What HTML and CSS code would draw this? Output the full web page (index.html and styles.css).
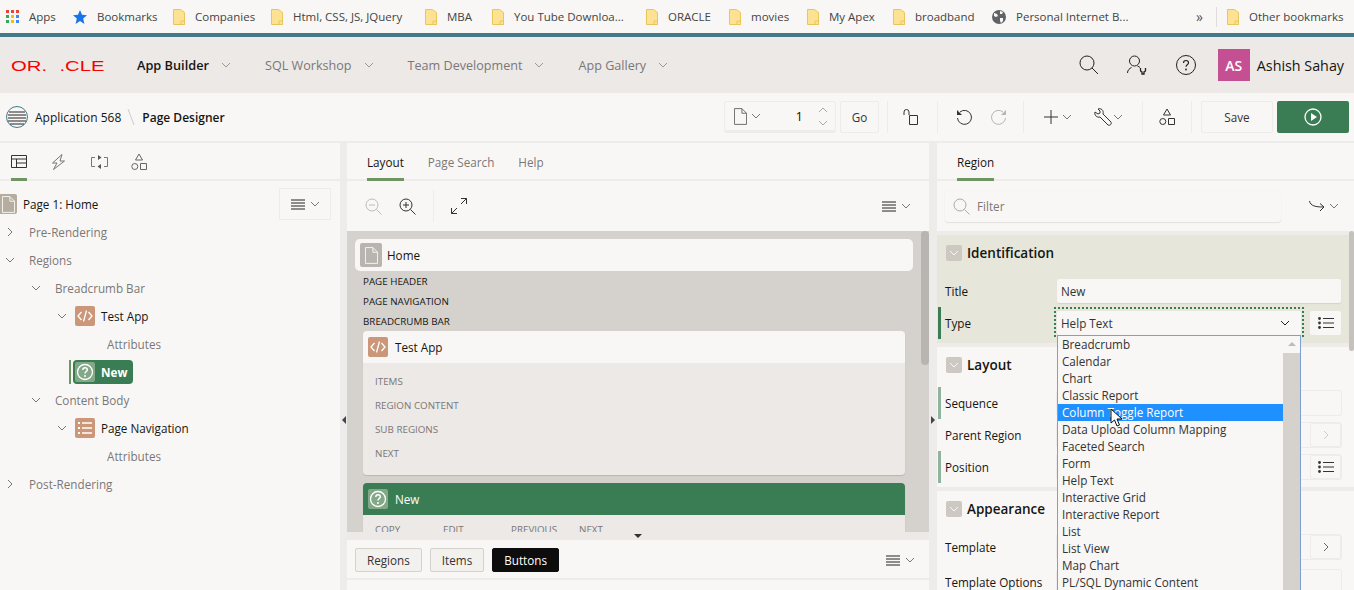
FILE: index.html
```html
<!DOCTYPE html>
<html>
<head>
    <title>Page Designer</title>
    <meta charset="utf-8" />
    <link rel="stylesheet" href="styles.css">
</head>
<body>
    <svg class="defs" width="0" height="0">
        <symbol id="chev-d" viewBox="0 0 10 6"><path d="M1 1l4 4 4-4" fill="none" stroke="currentColor"/></symbol>
        <symbol id="chev-r" viewBox="0 0 6 10"><path d="M1 1l4 4-4 4" fill="none" stroke="currentColor"/></symbol>
        <symbol id="folder" viewBox="0 0 12 16"><path d="M.5.5h7l4 3v12H.5z" fill="#fde293" stroke="#e8c65a"/><path d="M8 12h3.500v3.500H8z" fill="none" stroke="#e8c65a"/></symbol>
        <symbol id="menu" viewBox="0 0 14 11"><path d="M0 1h14M0 4h14M0 7h14M0 10h14" stroke="currentColor"/></symbol>
        <symbol id="code" viewBox="0 0 20 20"><rect width="20" height="20" rx="2" fill="#cc9678"/><path d="M6.500 6l-3.500 4 3.500 4M13.500 6l3.500 4-3.500 4M11.500 4.500l-3 11" fill="none" stroke="#fff" stroke-width="1.300"/></symbol>
        <symbol id="help" viewBox="0 0 20 20"><rect width="20" height="20" rx="2" fill="#83a888"/><circle cx="10" cy="10" r="7.500" fill="none" stroke="#fff" stroke-width="1.300"/><path d="M7.800 8c0-3 4.500-3 4.500-.3 0 1.800-2.300 1.800-2.300 3.800" fill="none" stroke="#fff" stroke-width="1.500"/><circle cx="10" cy="14" r="1" fill="#fff"/></symbol>
        <symbol id="bullets" viewBox="0 0 16 12"><path d="M5 1.500h11M5 6h11M5 10.500h11" stroke="currentColor"/><circle cx="1.500" cy="1.500" r="1.400" fill="currentColor"/><circle cx="1.500" cy="6" r="1.400" fill="currentColor"/><circle cx="1.500" cy="10.500" r="1.400" fill="currentColor"/></symbol>
        <symbol id="shapes" viewBox="0 0 16 18"><path d="M8 1l3.500 6h-7zM9.500 10.500h6v6h-6z" fill="none" stroke="currentColor"/><circle cx="3.800" cy="13.500" r="3" fill="none" stroke="currentColor"/></symbol>
        <symbol id="page" viewBox="0 0 14 18"><path d="M.5.500h8l5 5v12H.5zM8.500.500v5h5" fill="none" stroke="currentColor"/></symbol>
    </svg>

    <div class="bookmarks">
        <span class="bm bm-apps">
            <svg class="ico-apps" width="13" height="13" viewBox="0 0 13 13">
                <path d="M0 0h3v3H0z" fill="#ea4335"/><path d="M5 0h3v3H5z" fill="#ea4335"/><path d="M10 0h3v3h-3z" fill="#ea4335"/>
                <path d="M0 5h3v3H0z" fill="#34a853"/><path d="M5 5h3v3H5z" fill="#fbbc05"/><path d="M10 5h3v3h-3z" fill="#4285f4"/>
                <path d="M0 10h3v3H0z" fill="#34a853"/><path d="M5 10h3v3H5z" fill="#fbbc05"/><path d="M10 10h3v3h-3z" fill="#4285f4"/>
            </svg>Apps
        </span>
        <span class="bm bm-star">
            <svg width="14" height="14" viewBox="0 0 14 14"><path d="M7 0l2 4.800 5 .4-3.800 3.300L11.400 14 7 11.100 2.600 14l1.200-5.500L0 5.200l5-.4z" fill="#1a73e8"/></svg>Bookmarks
        </span>
        <span class="bm bm-comp"><svg class="fold"><use href="#folder"/></svg>Companies</span>
        <span class="bm bm-html"><svg class="fold"><use href="#folder"/></svg>Html, CSS, JS, JQuery</span>
        <span class="bm bm-mba"><svg class="fold"><use href="#folder"/></svg>MBA</span>
        <span class="bm bm-tube"><svg class="fold"><use href="#folder"/></svg>You Tube Downloa...</span>
        <span class="bm bm-ora"><svg class="fold"><use href="#folder"/></svg>ORACLE</span>
        <span class="bm bm-mov"><svg class="fold"><use href="#folder"/></svg>movies</span>
        <span class="bm bm-apex"><svg class="fold"><use href="#folder"/></svg>My Apex</span>
        <span class="bm bm-broad"><svg class="fold"><use href="#folder"/></svg>broadband</span>
        <span class="bm bm-pers">
            <svg width="14" height="14" viewBox="0 0 14 14"><circle cx="7" cy="7" r="7" fill="#5f6368"/><path d="M2 3l3 1 1 2-2 1-2-1zM8 1l3 1-1 2-2 0zM8 8l3 0 0 3-2 2-1-2z" fill="#f8f7f5"/></svg>Personal Internet B...
        </span>
        <span class="bm-more">»</span>
        <span class="bm-sep"></span>
        <span class="bm"><svg class="fold"><use href="#folder"/></svg>Other bookmarks</span>
    </div>
    <div class="teal-line"></div>

    <header class="app-head">
        <div class="logo-box"><span class="logo">OR. .CLE</span></div>
        <nav class="nav">
            <a class="nav-item nav-on">App Builder<svg class="chev"><use href="#chev-d"/></svg></a>
            <a class="nav-item">SQL Workshop<svg class="chev"><use href="#chev-d"/></svg></a>
            <a class="nav-item">Team Development<svg class="chev"><use href="#chev-d"/></svg></a>
            <a class="nav-item">App Gallery<svg class="chev"><use href="#chev-d"/></svg></a>
        </nav>
        <div class="head-right">
            <svg class="h-search" width="20" height="20" viewBox="0 0 20 20"><circle cx="8" cy="8" r="7" fill="none" stroke="#222"/><path d="M13 13l6 6" stroke="#222"/></svg>
            <svg class="h-user" width="22" height="21" viewBox="0 0 22 21"><circle cx="8.500" cy="6" r="5" fill="none" stroke="#222"/><path d="M1.500 18c0-3 2-4.500 4-5.500M11.500 11c1 .5 2 1 2.500 1.500" fill="none" stroke="#222"/><path d="M14.500 13v2.500a2 2 0 0 0 1.500 1.500v2h2v-2a2 2 0 0 0 1.500-1.500V13" fill="none" stroke="#222" stroke-width="1.300"/></svg>
            <svg class="h-help" width="20" height="20" viewBox="0 0 20 20"><circle cx="10" cy="10" r="9.500" fill="none" stroke="#222"/><path d="M7.500 8c0-3.300 5-3.300 5-.3 0 2-2.500 2-2.500 4" fill="none" stroke="#222" stroke-width="1.200"/><circle cx="10" cy="14.500" r=".9" fill="#222"/></svg>
            <span class="avatar">AS</span>
            <span class="user-name">Ashish Sahay</span>
        </div>
    </header>

    <div class="toolbar">
        <svg class="crumb-ico" width="22" height="22" viewBox="0 0 22 22"><circle cx="11" cy="11" r="10.500" fill="#f8f7f5" stroke="#437a8a"/><path d="M3 6h16M2 9h18M2 12h18M2 15h18M4 18h14" stroke="#222" stroke-width="1.200"/></svg>
        <span class="crumb">Application 568</span>
        <svg class="crumb-sep" width="8" height="18" viewBox="0 0 8 18"><path d="M1 1l6 16" stroke="#ccc"/></svg>
        <span class="crumb crumb-on">Page Designer</span>
        <div class="tools">
            <div class="page-field">
                <svg class="t-page"><use href="#page"/></svg>
                <svg class="chev t-chev"><use href="#chev-d"/></svg>
                <span class="page-num">1</span>
                <span class="spin">
                    <svg class="chev up"><use href="#chev-d"/></svg>
                    <svg class="chev"><use href="#chev-d"/></svg>
                </span>
            </div>
            <button class="tbtn go">Go</button>
            <span class="tsep s1"></span>
            <svg class="t-lock" width="15" height="16" viewBox="0 0 15 16"><path d="M1 6V3a2.500 2.500 0 0 1 5 0v3" fill="none" stroke="#333"/><path d="M6.500 6.500h8v9h-8z" fill="none" stroke="#333"/></svg>
            <span class="tsep s2"></span>
            <svg class="t-undo" width="16" height="16" viewBox="0 0 16 16"><path d="M4 3a7 7 0 1 1-2.500 6" fill="none" stroke="#333"/><path d="M1 1v5h5z" fill="#333"/></svg>
            <svg class="t-redo" width="16" height="16" viewBox="0 0 16 16"><path d="M12 3a7 7 0 1 0 2.500 6" fill="none" stroke="#b5b5b5"/><path d="M15 1v5h-5z" fill="#b5b5b5"/></svg>
            <span class="tsep s3"></span>
            <svg class="t-plus" width="14" height="14" viewBox="0 0 14 14"><path d="M7 0v14M0 7h14" stroke="#333"/></svg>
            <svg class="chev t-chev2"><use href="#chev-d"/></svg>
            <svg class="t-wrench" width="18" height="18" viewBox="0 0 18 18"><path d="M1 4l3 2 2-1 0-2-2-2c3-1 6 1 5 5l8 8c1 2-1 4-3 3L6 9C3 10 0 7 1 4z" fill="none" stroke="#333"/></svg>
            <svg class="chev t-chev3"><use href="#chev-d"/></svg>
            <span class="tsep s4"></span>
            <svg class="t-shapes"><use href="#shapes"/></svg>
            <span class="tsep s5"></span>
            <button class="tbtn save">Save</button>
            <button class="run">
                <svg width="18" height="18" viewBox="0 0 18 18"><circle cx="9" cy="9" r="8" fill="none" stroke="#fff" stroke-width="1.300"/><path d="M7 5l6 4-6 4z" fill="#fff"/></svg>
            </button>
        </div>
    </div>

    <main class="designer">
        <section class="pane-left">
            <div class="tabs icon-tabs">
                <span class="itab itab-on"><svg width="16" height="13" viewBox="0 0 16 13"><path d="M.5.500h15v12H.5zM.5 4h15M5.500 4v8.500M5.500 8h10" fill="none" stroke="#333"/></svg></span>
                <span class="itab"><svg class="i-bolt" width="15" height="16" viewBox="0 0 15 16"><path d="M11 .5L1.500 9H6l-3.500 6.500L13.500 7H9z" fill="none" stroke="#777"/></svg></span>
                <span class="itab"><svg width="17" height="14" viewBox="0 0 17 14"><path d="M4 2.500H.5v9H4M13 11.500h3.500v-9H13" fill="none" stroke="#777"/><path d="M7 0l3.500 2.500L7 5zM10 9l-3.500 2.500L10 14z" fill="#555"/></svg></span>
                <span class="itab"><svg class="t-shapes2"><use href="#shapes"/></svg></span>
            </div>
            <div class="tree">
                <div class="tree-top">
                    <span class="page-ico"><svg width="13" height="17"><use href="#page"/></svg></span>
                    <span class="t-dark">Page 1: Home</span>
                    <button class="menu-btn"><svg class="menu-ico"><use href="#menu"/></svg><svg class="chev"><use href="#chev-d"/></svg></button>
                </div>
                <div class="node lv0"><svg class="tog"><use href="#chev-r"/></svg>Pre-Rendering</div>
                <div class="node lv0"><svg class="tog tog-d"><use href="#chev-d"/></svg>Regions</div>
                <div class="node lv1"><svg class="tog tog-d"><use href="#chev-d"/></svg>Breadcrumb Bar</div>
                <div class="node lv2 t-dark"><svg class="tog tog-d"><use href="#chev-d"/></svg><svg class="n-ico"><use href="#code"/></svg>Test App</div>
                <div class="node lv3">Attributes</div>
                <div class="node lv2b">
                    <span class="sel-mark"></span>
                    <span class="sel-node"><svg class="n-ico"><use href="#help"/></svg>New</span>
                </div>
                <div class="node lv1"><svg class="tog tog-d"><use href="#chev-d"/></svg>Content Body</div>
                <div class="node lv2 t-dark"><svg class="tog tog-d"><use href="#chev-d"/></svg>
                    <svg class="n-ico" viewBox="0 0 20 20"><rect width="20" height="20" rx="2" fill="#cc9678"/><path d="M7 5h10M7 10h10M7 15h10" stroke="#fff" stroke-width="1.400"/><path d="M3 4h2v2H3zM3 9h2v2H3zM3 14h2v2H3z" fill="#fff"/></svg>Page Navigation
                </div>
                <div class="node lv3">Attributes</div>
                <div class="node lv0"><svg class="tog"><use href="#chev-r"/></svg>Post-Rendering</div>
            </div>
        </section>

        <div class="splitter"><span class="arr-l"></span></div>

        <section class="pane-mid">
            <div class="tabs">
                <span class="tab tab-on">Layout</span>
                <span class="tab">Page Search</span>
                <span class="tab">Help</span>
            </div>
            <div class="mid-tools">
                <svg class="z-out" width="17" height="17" viewBox="0 0 17 17"><circle cx="7" cy="7" r="6" fill="none" stroke="#bbb"/><path d="M4 7h6M11.500 11.500l5 5" stroke="#bbb"/></svg>
                <svg class="z-in" width="17" height="17" viewBox="0 0 17 17"><circle cx="7" cy="7" r="6" fill="none" stroke="#333"/><path d="M4 7h6M7 4v6M11.500 11.500l5 5" stroke="#333"/></svg>
                <span class="tsep m-sep"></span>
                <svg width="16" height="16" viewBox="0 0 16 16"><path d="M6 10L.5 15.500M.5 10v5.500H6M10 6l5.500-5.500M10 .5h5.500V6" fill="none" stroke="#333"/></svg>
                <svg class="menu-ico m-menu"><use href="#menu"/></svg><svg class="chev"><use href="#chev-d"/></svg>
            </div>
            <div class="canvas">
                <div class="scroll"><div class="thumb"></div></div>
                <div class="page-bar">
                    <span class="page-ico grey"><svg width="13" height="17"><use href="#page"/></svg></span>
                    Home
                </div>
                <div class="cap">PAGE HEADER</div>
                <div class="cap">PAGE NAVIGATION</div>
                <div class="cap">BREADCRUMB BAR</div>
                <div class="card">
                    <div class="card-head"><svg class="n-ico"><use href="#code"/></svg>Test App</div>
                    <div class="card-body">
                        <div class="slot">ITEMS</div>
                        <div class="slot">REGION CONTENT</div>
                        <div class="slot">SUB REGIONS</div>
                        <div class="slot">NEXT</div>
                    </div>
                </div>
                <div class="card card-green">
                    <div class="card-head"><svg class="n-ico"><use href="#help"/></svg>New</div>
                    <div class="card-body row-slots">
                        <span>COPY</span><span>EDIT</span><span>PREVIOUS</span><span>NEXT</span>
                    </div>
                </div>
            </div>
            <div class="h-split"><span class="arr-d"></span></div>
            <div class="gallery">
                <button class="g-btn">Regions</button>
                <button class="g-btn">Items</button>
                <button class="g-btn g-on">Buttons</button>
                <svg class="menu-ico g-menu"><use href="#menu"/></svg><svg class="chev"><use href="#chev-d"/></svg>
            </div>
        </section>

        <div class="splitter"><span class="arr-r"></span></div>

        <section class="pane-right">
            <div class="tabs">
                <span class="tab tab-on">Region</span>
            </div>
            <div class="filter-bar">
                <div class="filter">
                    <svg width="17" height="17" viewBox="0 0 17 17"><circle cx="7" cy="7" r="6" fill="none" stroke="#aaa"/><path d="M11.500 11.500l5 5" stroke="#aaa"/></svg>
                    Filter
                </div>
                <svg class="go-ico" width="16" height="12" viewBox="0 0 16 12"><path d="M.5 1c1 5 6 6 14 6M11 3.500L15 7l-4 4" fill="none" stroke="#333"/></svg>
                <svg class="chev"><use href="#chev-d"/></svg>
            </div>
            <div class="props">
                <div class="scroll-r"></div>
                <div class="sec sec-on">
                    <div class="sec-head"><span class="sec-tog"><svg class="chev"><use href="#chev-d"/></svg></span>Identification</div>
                    <div class="prop"><label>Title</label><span class="inp">New</span></div>
                    <div class="prop mark-dark"><label>Type</label>
                        <span class="sel-wrap"><span class="inp sel">Help Text<svg class="chev"><use href="#chev-d"/></svg></span></span>
                        <span class="side-btn flat"><svg class="bul"><use href="#bullets"/></svg></span>
                    </div>
                </div>
                <div class="sec">
                    <div class="sec-head"><span class="sec-tog"><svg class="chev"><use href="#chev-d"/></svg></span>Layout</div>
                    <div class="prop mark"><label>Sequence</label><span class="inp outl"></span></div>
                    <div class="prop"><label>Parent Region</label><span class="inp outl"></span><span class="side-btn"><svg class="side-chev"><use href="#chev-r"/></svg></span></div>
                    <div class="prop mark"><label>Position</label><span class="inp outl"></span><span class="side-btn"><svg class="bul"><use href="#bullets"/></svg></span></div>
                </div>
                <div class="sec">
                    <div class="sec-head"><span class="sec-tog"><svg class="chev"><use href="#chev-d"/></svg></span>Appearance</div>
                    <div class="prop"><label>Template</label><span class="inp outl"></span><span class="side-btn dark"><svg class="side-chev"><use href="#chev-r"/></svg></span></div>
                    <div class="prop p-last"><label>Template Options</label><span class="inp outl"></span></div>
                </div>
            </div>
        </section>
    </main>

    <ul class="dropdown">
        <li>Breadcrumb</li>
        <li>Calendar</li>
        <li>Chart</li>
        <li>Classic Report</li>
        <li class="hl">Column Toggle Report</li>
        <li>Data Upload Column Mapping</li>
        <li>Faceted Search</li>
        <li>Form</li>
        <li>Help Text</li>
        <li>Interactive Grid</li>
        <li>Interactive Report</li>
        <li>List</li>
        <li>List View</li>
        <li>Map Chart</li>
        <li>PL/SQL Dynamic Content</li>
        <li class="dd-track"><span class="dd-up"></span></li>
    </ul>
    <svg class="cursor" width="13" height="19" viewBox="0 0 13 19"><path d="M1 1v14l3.500-3 2.500 6 2.500-1-2.500-6h5z" fill="#fff" stroke="#111"/></svg>
</body>
</html>
```

FILE: styles.css
```css
* {
    box-sizing: border-box;
}

html, body {
    margin: 0;
    height: 590px;
    overflow: hidden;
}

body {
    position: relative;
    background-color: #f8f7f5;
    color: #5f6368;
    font-family: "Open Sans", sans-serif;
    font-size: 11.700px;
}

.defs {
    position: absolute;
}

button {
    font: inherit;
    padding: 0;
}

svg {
    flex: none;
}

.chev {
    width: 10px;
    height: 6px;
    color: #777;
}

/* bookmarks */
.bookmarks {
    height: 33px;
    display: flex;
    align-items: center;
    padding-left: 6px;
    color: #444;
    font-size: 11.500px;
    white-space: nowrap;
}

.bm {
    display: flex;
    align-items: center;
    gap: 10px;
}

.fold {
    width: 12px;
    height: 16px;
}

.bm-apps { width: 67px; }
.bm-star { width: 100px; }
.bm-comp { width: 98px; }
.bm-html { width: 154px; }
.bm-mba { width: 67px; }
.bm-tube { width: 154px; }
.bm-ora { width: 83px; }
.bm-mov { width: 78px; }
.bm-apex { width: 86px; }
.bm-broad { width: 99px; }
.bm-pers { width: 204px; }

.bm-more {
    width: 15px;
    color: #555;
    font-size: 14px;
}

.bm-sep {
    width: 1px;
    height: 20px;
    margin: 0 10px 0 5px;
    background-color: #ddd;
}

.teal-line {
    height: 4px;
    background-color: #437a8a;
}

/* app header */
.app-head {
    height: 56px;
    display: flex;
    align-items: center;
    background-color: #ece9e6;
}

.logo-box {
    width: 137px;
    padding-left: 11px;
}

.logo {
    display: inline-block;
    color: #f80000;
    font-family: "Liberation Sans", sans-serif;
    font-size: 15px;
    word-spacing: 5px;
    white-space: pre;
    transform: scaleX(1.35);
    transform-origin: left;
}

.nav {
    display: flex;
}

.nav-item {
    display: flex;
    align-items: center;
    gap: 12px;
    margin-right: 34px;
    color: #7b7777;
    font-size: 12.600px;
}

.nav-item .chev {
    color: #999;
}

.nav-on {
    color: #161513;
    font-size: 12.750px;
    font-weight: 600;
}

.head-right {
    margin-left: auto;
    display: flex;
    align-items: center;
    padding-right: 10px;
    color: #161513;
}

.h-user { margin: 0 0 0 27px; }
.h-help { margin: 0 22px 0 28px; }

.avatar {
    width: 32px;
    height: 32px;
    margin-right: 7px;
    display: flex;
    align-items: center;
    justify-content: center;
    background-color: #c54f93;
    color: #fff;
    font-weight: 600;
    font-size: 14px;
}

.user-name {
    font-size: 14.300px;
}

/* toolbar */
.toolbar {
    height: 48px;
    display: flex;
    align-items: center;
    padding: 0 5px 0 6px;
    color: #161513;
}

.crumb {
    margin-left: 7px;
    font-size: 12px;
}

.crumb-sep {
    margin-left: 6px;
}

.crumb-on {
    margin-left: 7px;
    font-weight: 600;
}

.tools {
    margin-left: auto;
    display: flex;
    align-items: center;
    height: 32px;
}

.page-field {
    width: 112px;
    height: 32px;
    display: flex;
    align-items: center;
    padding-left: 9px;
    border: 1px solid #eeecea;
    border-bottom-width: 3px;
    border-radius: 3px;
}

.t-page {
    width: 13px;
    height: 17px;
    color: #666;
}

.t-chev {
    margin-left: 4px;
}

.page-num {
    margin-left: auto;
    font-size: 13px;
}

.spin {
    width: 24px;
    margin-left: 8px;
    display: flex;
    flex-direction: column;
    align-items: center;
    gap: 7px;
}

.spin .chev {
    color: #aaa;
}

.up {
    transform: rotate(180deg);
}

.tbtn {
    height: 32px;
    background: none;
    border: 1px solid #eeecea;
    color: #333;
    border-radius: 2px;
}

.go {
    width: 39px;
    margin-left: 4px;
}

.tsep {
    width: 1px;
    height: 32px;
    background-color: #eeecea;
}

.s1 { margin: 0 15px 0 8px; }
.t-lock { margin-right: 19px; }
.s2 { margin-right: 18px; }
.t-redo { margin: 0 16px 0 19px; }
.t-plus { margin: 0 4px 0 20px; }
.t-chev2 { margin-right: 22px; }
.t-chev3 { margin: 0 19px 0 1px; }
.t-shapes {
    width: 16px;
    height: 18px;
    margin: 0 16px;
    color: #333;
}
.save {
    width: 72px;
    margin: 0 4px 0 9px;
}

.run {
    width: 72px;
    height: 32px;
    display: flex;
    align-items: center;
    justify-content: center;
    border: 0;
    border-radius: 2px;
    background-color: #3a7d54;
}

/* panes */
.designer {
    display: grid;
    grid-template-columns: 340px 7px 582px 8px 417px;
    height: 449px;
}

.splitter {
    display: flex;
    align-items: center;
    background-color: #eeecea;
}

.arr-l, .arr-r {
    width: 0;
    height: 0;
    border-top: 4px solid transparent;
    border-bottom: 4px solid transparent;
    margin: 275px 0 0 2px;
    align-self: flex-start;
}

.arr-l {
    border-right: 4px solid #444;
}

.arr-r {
    border-left: 4px solid #444;
}

.tabs {
    height: 40px;
    display: flex;
    gap: 24px;
    padding-left: 20px;
    border-top: 2px solid #eeecea;
    border-bottom: 2px solid #eeecea;
}

.tab {
    height: 38px;
    padding-top: 11px;
    color: #7b7777;
}

.tab-on {
    color: #161513;
    border-bottom: 3px solid #6f9563;
}

.icon-tabs {
    padding-left: 11px;
    gap: 24px;
}

.itab {
    width: 16px;
    height: 38px;
    padding-top: 12px;
}

.itab-on {
    border-bottom: 3px solid #6f9563;
}

.i-bolt {
    margin-top: -1px;
}

.t-shapes2 {
    width: 16px;
    height: 18px;
    margin-top: -2px;
    color: #666;
}

/* tree */
.tree {
    color: #7b7777;
}

.t-dark {
    color: #161513;
}

.tree-top {
    height: 42px;
    display: flex;
    align-items: center;
    padding: 4px 9px 0 0;
}

.page-ico {
    width: 17px;
    height: 20px;
    margin-right: 6px;
    display: flex;
    align-items: center;
    justify-content: center;
    background-color: #b5ad9e;
    border-radius: 0 2px 2px 0;
    color: #f8f7f5;
}

.page-ico svg {
    fill: #f8f7f5;
}

.menu-btn {
    width: 52px;
    height: 32px;
    margin-left: auto;
    display: flex;
    align-items: center;
    justify-content: center;
    gap: 5px;
    background: none;
    border: 1px solid #eeecea;
}

.menu-ico {
    width: 14px;
    height: 11px;
    color: #222;
}

.node {
    height: 28px;
    display: flex;
    align-items: center;
}

.tree-top + .node {
    margin-top: -5px;
}

.tog {
    width: 6px;
    height: 10px;
    margin-right: 16px;
    color: #777;
}

.tog-d {
    width: 10px;
    height: 6px;
    margin-right: 14px;
}

.lv0 { padding-left: 7px; }
.lv0 .tog-d { margin-left: -2px; }
.lv1 { padding-left: 31px; }
.lv2 { padding-left: 57px; }
.lv2 .tog { margin-right: 8px; }
.lv3 { padding-left: 107px; }
.lv2b { padding-left: 69px; }

.n-ico {
    width: 20px;
    height: 20px;
    margin-right: 6px;
}

.sel-mark {
    width: 2px;
    height: 24px;
    margin-right: 2px;
    background-color: #6f9563;
}

.sel-node {
    height: 24px;
    display: flex;
    align-items: center;
    padding: 0 6px 0 2px;
    border-radius: 4px;
    background-color: #3a7d54;
    color: #fff;
    font-weight: 700;
}

/* middle */
.pane-mid {
    position: relative;
}

.mid-tools {
    height: 50px;
    display: flex;
    align-items: center;
    padding: 0 18px;
}

.z-in { margin-left: 17px; }
.m-sep { margin: 0 17px; }
.m-menu { margin: 0 5px 0 auto; }

.canvas {
    position: relative;
    height: 301px;
    padding: 8px 16px 0 8px;
    overflow: hidden;
    background-color: #d5d2cd;
}

.scroll {
    position: absolute;
    top: 0;
    right: 0;
    width: 8px;
    height: 100%;
}

.thumb {
    height: 134px;
    border-radius: 4px;
    background-color: #b8b5b0;
}

.page-bar {
    height: 32px;
    display: flex;
    align-items: center;
    padding-left: 5px;
    border-radius: 5px;
    background-color: #f8f7f5;
    color: #161513;
}

.page-bar .grey {
    width: 22px;
    height: 24px;
    margin-right: 5px;
    background-color: #b8b5b0;
    border-radius: 2px;
}

.cap {
    height: 20px;
    padding: 1px 0 0 8px;
    color: #161513;
    font-size: 9.800px;
    line-height: 19px;
}

.card {
    margin: 0 8px 8px 8px;
    border-radius: 4px;
    box-shadow: 0 1px 1px #b8b5b0;
    overflow: hidden;
}

.card-head {
    height: 32px;
    display: flex;
    align-items: center;
    padding-left: 5px;
    background-color: #f8f7f5;
    color: #161513;
}

.card-head .n-ico {
    margin-right: 7px;
}

.card-body {
    height: 112px;
    padding: 7px 0 0 12px;
    background-color: #ece9e6;
    color: #7b7777;
    font-size: 9.800px;
}

.slot {
    height: 24px;
    line-height: 24px;
}

.card-green .card-head {
    background-color: #3a7d54;
    color: #fff;
}

.row-slots {
    display: flex;
    padding-top: 8px;
}

.row-slots span {
    width: 68px;
}

.h-split {
    position: relative;
    height: 8px;
    background-color: #ece9e6;
}

.arr-d {
    position: absolute;
    top: 2px;
    left: 287px;
    width: 0;
    height: 0;
    border-left: 4px solid transparent;
    border-right: 4px solid transparent;
    border-top: 4px solid #333;
}

.gallery {
    height: 40px;
    display: flex;
    align-items: center;
    padding: 2px 14px 0 8px;
    border-bottom: 2px solid #eeecea;
}

.g-btn {
    height: 24px;
    padding: 0 11px;
    margin-right: 8px;
    background-color: #f3f1ee;
    border: 1px solid #d5d2cd;
    border-radius: 2px;
    color: #333;
}

.g-on {
    background-color: #0d0d0d;
    border-color: #0d0d0d;
    color: #fff;
}

.g-menu {
    margin: 0 5px 0 auto;
}

/* right */
.pane-right {
    position: relative;
    overflow: hidden;
}

.filter-bar {
    height: 50px;
    display: flex;
    align-items: center;
    padding: 0 15px 0 8px;
}

.filter {
    width: 336px;
    height: 31px;
    display: flex;
    align-items: center;
    gap: 7px;
    padding-left: 8px;
    border-radius: 3px;
    box-shadow: 0 1px 1px #e3e1dd, 0 0 1px #eeecea;
    color: #7b7777;
}

.go-ico {
    margin: 0 4px 0 28px;
}

.props {
    position: relative;
    padding-top: 4px;
    background-color: #eeecea;
}

.scroll-r {
    position: absolute;
    top: 0;
    right: 0;
    width: 5px;
    height: 120px;
    background-color: #c5c2bd;
    border-radius: 3px;
    z-index: 1;
}

.sec {
    padding: 0 12px 4px 1px;
    margin-bottom: 4px;
    background-color: #f8f7f5;
}

.sec-on {
    background-color: #e6e7da;
}

.sec-head {
    height: 36px;
    margin-bottom: 4px;
    display: flex;
    align-items: center;
    gap: 5px;
    padding: 0 0 1px 8px;
    color: #161513;
    font-size: 13.500px;
    font-weight: 600;
}

.sec-tog {
    width: 16px;
    height: 16px;
    display: flex;
    align-items: center;
    justify-content: center;
    background-color: #cdc9c2;
    border-radius: 2px;
}

.sec-tog .chev {
    color: #f8f7f5;
}

.prop {
    position: relative;
    height: 32px;
    display: flex;
    align-items: center;
    color: #161513;
}

.prop label {
    width: 119px;
    padding-left: 7px;
}

.mark::before, .mark-dark::before {
    content: "";
    position: absolute;
    left: 0;
    top: 0;
    width: 3px;
    height: 32px;
    background-color: #8fb39c;
}

.mark-dark::before {
    background-color: #3a7d54;
}

.inp {
    width: 284px;
    height: 24px;
    display: flex;
    align-items: center;
    padding-left: 4px;
    border-radius: 2px;
    background-color: #f8f7f5;
    box-shadow: 0 1px 1px #d5d2cd;
    color: #333;
}

.sel-wrap {
    align-self: flex-start;
    margin-left: -3px;
    padding: 2px 1px;
    border: 2px dotted #3a7d54;
    border-bottom: 0;
}

.inp.sel {
    width: 244px;
    justify-content: space-between;
    padding-right: 11px;
    box-shadow: none;
}

.sel .chev {
    color: #222;
}

.outl {
    box-shadow: 0 0 0 1px #eeecea;
}

.side-btn {
    width: 31px;
    height: 24px;
    margin-left: 9px;
    display: flex;
    align-items: center;
    justify-content: center;
    border: 1px solid #eeecea;
    border-radius: 2px;
    flex: none;
}

.outl + .side-btn {
    margin-left: -31px;
}

.flat {
    margin-left: 6px;
    border: 0;
    background-color: #f8f7f5;
}

.bul {
    width: 16px;
    height: 12px;
    color: #333;
}

.side-chev {
    width: 6px;
    height: 10px;
    color: #ccc;
}

.dark .side-chev {
    color: #666;
}

.p-last {
    margin-top: 3px;
}

/* open select list */
.dropdown {
    position: absolute;
    top: 335px;
    left: 1057px;
    width: 244px;
    height: 260px;
    margin: 0;
    padding: 0;
    list-style: none;
    overflow: hidden;
    background-color: #f8f7f5;
    border: 1px solid #7d9fd3;
    color: #333;
}

.dropdown li {
    width: 225px;
    height: 17px;
    padding-left: 4px;
    line-height: 17px;
    white-space: nowrap;
}

.dropdown .hl {
    background-color: #1e90ff;
    color: #fff;
}

.dropdown .dd-track {
    position: absolute;
    top: 0;
    right: 0;
    width: 17px;
    height: 100%;
    padding: 0;
    background: linear-gradient(#f8f7f5 17px, #d5d2cd 17px);
}

.dd-up {
    position: absolute;
    top: 6px;
    left: 5px;
    width: 0;
    height: 0;
    border-left: 4px solid transparent;
    border-right: 4px solid transparent;
    border-bottom: 4px solid #bbb;
}

.cursor {
    position: absolute;
    top: 408px;
    left: 1110px;
}
```
